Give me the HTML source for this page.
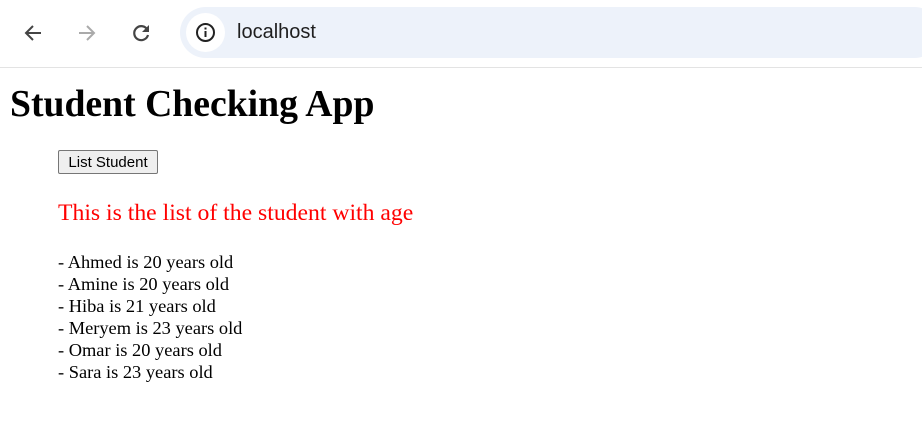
<!DOCTYPE html>
<html><head><style>
body{margin:0;width:922px;height:430px;overflow:hidden;background:#fff;font-family:"Liberation Serif",serif;}
.bar{position:absolute;left:0;top:0;width:922px;height:67px;background:#fff;border-bottom:1px solid #e3e3e3;}
.omni{position:absolute;left:180px;top:7px;width:760px;height:51px;border-radius:26px;background:#edf2fa;}
.info{position:absolute;left:186px;top:13px;width:39px;height:39px;border-radius:50%;background:#fff;}
.url{position:absolute;left:237px;top:21px;font:20px "Liberation Sans",sans-serif;color:#1f1f1f;}
h1{position:absolute;left:10px;top:82px;margin:0;font-size:37.7px;font-weight:bold;}
button{position:absolute;left:58px;top:150px;height:24px;width:100px;padding:0;font:15px "Liberation Sans",sans-serif;background:#efefef;border:1px solid #767676;border-radius:2px;color:#000;}
.red{position:absolute;left:58px;top:200px;color:red;font-size:23.7px;}
.list{position:absolute;left:58px;top:251px;font-size:18.4px;line-height:22px;}
</style></head><body>
<div class="bar">
<svg style="position:absolute;left:22px;top:22px" width="22" height="22" viewBox="0 0 22 22"><path d="M19 11H4M11 4l-7 7 7 7" stroke="#444" stroke-width="2" fill="none"/></svg>
<svg style="position:absolute;left:76px;top:22px" width="22" height="22" viewBox="0 0 22 22"><path d="M3 11h15M11 4l7 7-7 7" stroke="#aaa" stroke-width="2" fill="none"/></svg>
<svg style="position:absolute;left:130px;top:22px" width="22" height="22" viewBox="0 0 22 22"><path d="M17.5 8A7 7 0 1 0 18 13" stroke="#444" stroke-width="2.2" fill="none"/><path d="M19 3v7h-7z" fill="#444"/></svg>
<div class="omni"></div><div class="info"></div>
<svg style="position:absolute;left:195px;top:22px" width="21" height="21" viewBox="0 0 21 21"><circle cx="10.5" cy="10.5" r="8.5" stroke="#222" stroke-width="2" fill="none"/><rect x="9.5" y="9" width="2" height="6" fill="#222"/><rect x="9.5" y="5.5" width="2" height="2" fill="#222"/></svg>
<div class="url">localhost</div>
</div>
<h1>Student Checking App</h1>
<button>List Student</button>
<div class="red">This is the list of the student with age</div>
<div class="list">- Ahmed is 20 years old<br>- Amine is 20 years old<br>- Hiba is 21 years old<br>- Meryem is 23 years old<br>- Omar is 20 years old<br>- Sara is 23 years old</div>
</body></html>
